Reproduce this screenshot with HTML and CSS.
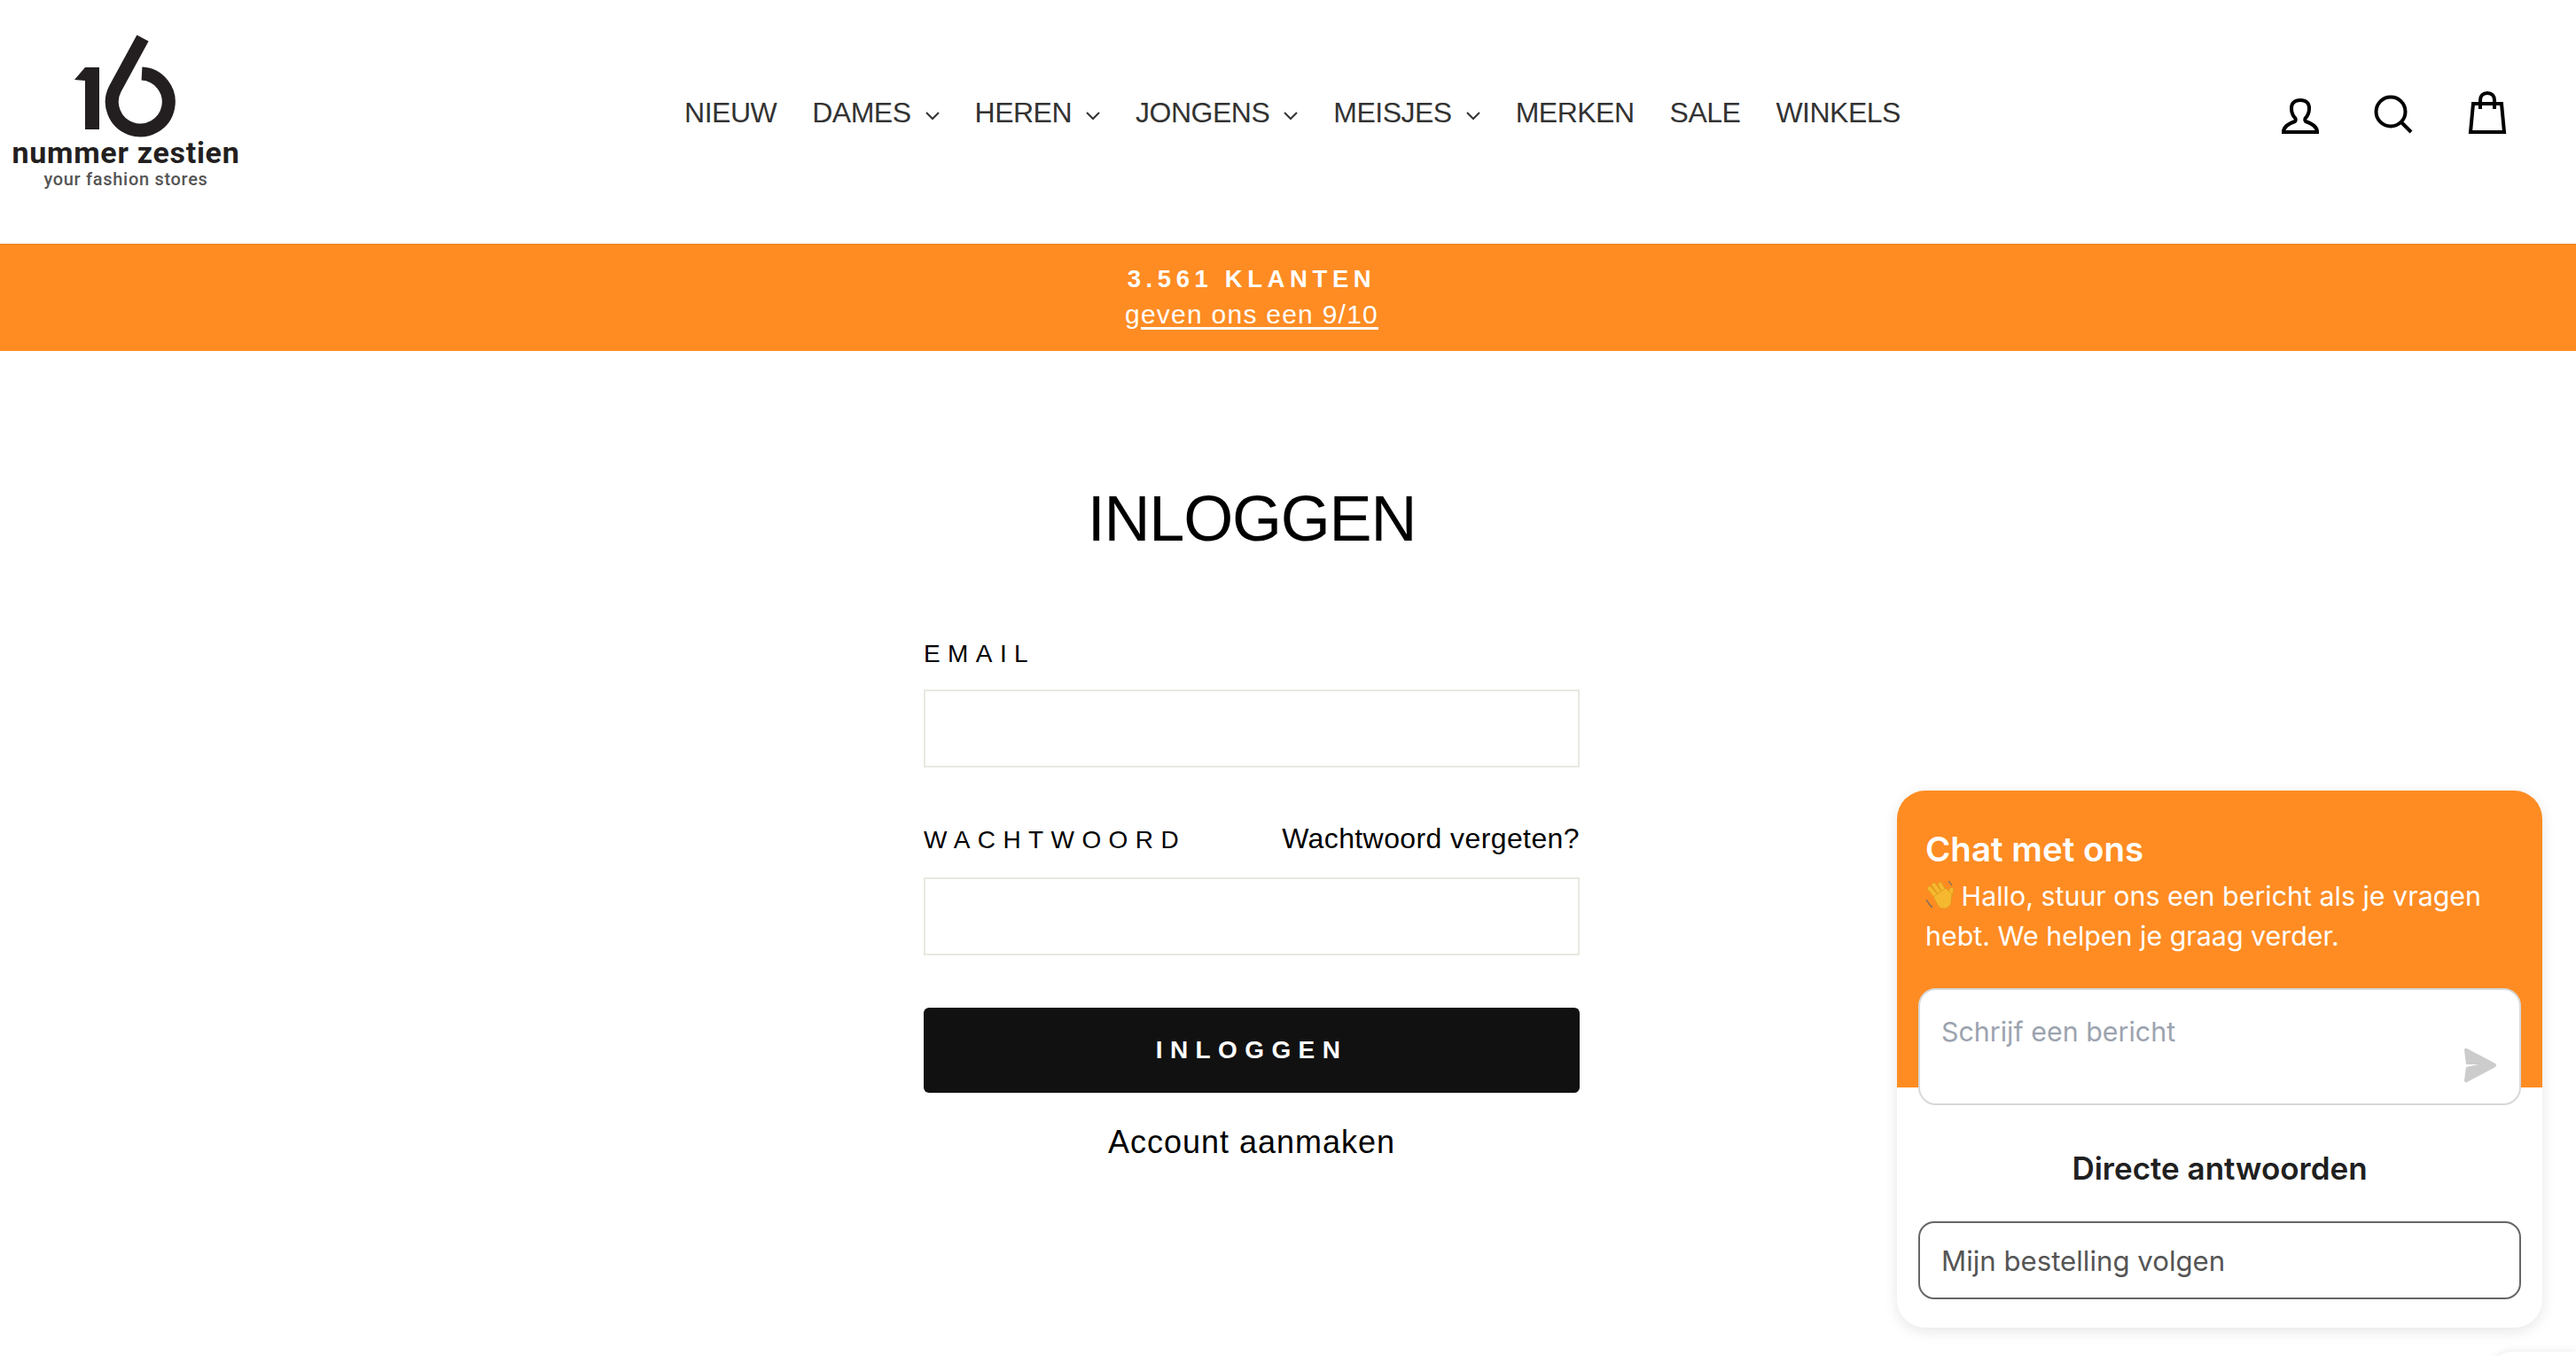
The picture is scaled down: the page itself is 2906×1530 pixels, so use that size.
FILE: index.html
```html
<!DOCTYPE html>
<html lang="nl">
  <head>
    <meta charset="UTF-8">
    <title>Inloggen - Nummer Zestien</title>
    <link rel="stylesheet" href="styles.css">
  </head>
  <body>
    <header class="site-header">
      <a class="logo" href="#">
        <svg class="logo-mark" width="130" height="118" viewBox="80 38 130 118">
          <path d="M84 90 L96 76 L112 76 L112 146 L96 146 L96 91 Z" fill="#231f20"/>
          <path d="M161 43 L130 100 A32 32 0 1 0 160 83" fill="none" stroke="#231f20" stroke-width="15"/>
        </svg>
        <span class="logo-name">nummer zestien</span>
        <span class="logo-tag">your fashion stores</span>
      </a>
      <nav class="main-nav">
        <a href="#">NIEUW</a>
        <a href="#">DAMES<svg class="chevron" viewBox="0 0 16 10"><path d="M1 1 L8 8 L15 1"/></svg></a>
        <a href="#">HEREN<svg class="chevron" viewBox="0 0 16 10"><path d="M1 1 L8 8 L15 1"/></svg></a>
        <a href="#">JONGENS<svg class="chevron" viewBox="0 0 16 10"><path d="M1 1 L8 8 L15 1"/></svg></a>
        <a href="#">MEISJES<svg class="chevron" viewBox="0 0 16 10"><path d="M1 1 L8 8 L15 1"/></svg></a>
        <a href="#">MERKEN</a>
        <a href="#">SALE</a>
        <a href="#">WINKELS</a>
      </nav>
      <div class="header-icons">
        <svg width="42" height="40" viewBox="0 0 42 40"><path d="M2 38 H40 C40 31 33 28 27 26 C26 25 26 23 27 22 C30 19 31 15 31 11 C31 5 27 2 21 2 C15 2 11 5 11 11 C11 15 12 19 15 22 C16 23 16 25 15 26 C9 28 2 31 2 38 Z" /></svg>
        <svg width="44" height="44" viewBox="0 0 44 44"><circle cx="19" cy="19" r="16.5"/><path d="M31 31 L42 42"/></svg>
        <svg width="44" height="48" viewBox="0 0 44 48"><path d="M6 14 H38 L41 46 H3 Z"/><path d="M14 20 V10 C14 5 17 2 22 2 C27 2 30 5 30 10 V20"/></svg>
      </div>
    </header>

    <div class="announcement">
      <div class="announcement-inner">
        <p class="announcement-title">3.561 KLANTEN</p>
        <a class="announcement-link" href="#">geven ons een 9/10</a>
      </div>
    </div>

    <main class="page">
      <div class="login">
        <h1>INLOGGEN</h1>
        <form>
          <label class="field-label" for="email">EMAIL</label>
          <input class="field" id="email" type="email">
          <div class="label-row">
            <label class="field-label" for="password">WACHTWOORD</label>
            <a class="forgot" href="#">Wachtwoord vergeten?</a>
          </div>
          <input class="field" id="password" type="password">
          <button class="btn" type="button">INLOGGEN</button>
          <a class="create" href="#">Account aanmaken</a>
        </form>
      </div>
    </main>

    <aside class="chat">
      <h2 class="chat-title">Chat met ons</h2>
      <p class="chat-intro"><svg class="wave" width="32" height="34" viewBox="0 0 32 34"><g fill="#f5b82e" stroke="#d9921a" stroke-width="0.6"><rect x="6" y="6" width="5" height="17" rx="2.5" transform="rotate(-40 8 14)"/><rect x="11" y="2" width="5" height="18" rx="2.5" transform="rotate(-36 13 11)"/><rect x="17" y="2" width="5" height="17" rx="2.5" transform="rotate(-30 19 10)"/><rect x="26" y="8" width="5" height="13" rx="2.5" transform="rotate(15 28 14)"/><path d="M9 19 L23 9 L30 16 L29 26 C27 32 20 34 15 30 Z"/></g><path d="M1 22 L5 28 M4 27 L8 31 M26 1 L30 6" stroke="#6b6b6b" stroke-width="1.2" fill="none"/></svg> Hallo, stuur ons een bericht als je vragen hebt. We helpen je graag verder.</p>
      <div class="chat-input">
        <span class="chat-placeholder">Schrijf een bericht</span>
        <svg class="send" width="38" height="40" viewBox="0 0 38 40"><path d="M1 3 Q1 0 4 1 L36 18 Q38 20 36 22 L4 39 Q1 40 1 37 L3 22 L17 19 L3 19 Z"/></svg>
      </div>
      <h3 class="chat-subtitle">Directe antwoorden</h3>
      <button class="chat-option" type="button">Mijn bestelling volgen</button>
    </aside>
    <div class="corner-badge"></div>
  </body>
</html>
```

FILE: styles.css
```css
html, body {
  margin: 0;
  padding: 0;
  height: 1530px;
  overflow: hidden;
  background: #ffffff;
}

body {
  font-family: "Liberation Sans", Arial, sans-serif;
  color: #000000;
  position: relative;
}

a {
  color: inherit;
  text-decoration: none;
}

.site-header {
  height: 275px;
  display: grid;
  grid-template-columns: 1fr auto 1fr;
  align-items: center;
}

.logo {
  align-self: start;
  display: flex;
  flex-direction: column;
  align-items: center;
  width: 284px;
  padding-top: 38px;
  font-family: Roboto, sans-serif;
}

.logo-mark {
  display: block;
  margin-left: 6px;
}

.logo-name {
  font-size: 34px;
  line-height: 32px;
  font-weight: 700;
  letter-spacing: 0.7px;
  color: #231f20;
  white-space: nowrap;
}

.logo-tag {
  margin-top: 2px;
  font-size: 20px;
  line-height: 24px;
  font-weight: 500;
  letter-spacing: 0.7px;
  color: #555555;
  white-space: nowrap;
}

.main-nav {
  display: flex;
  align-items: center;
  gap: 40px;
  margin-top: -21px;
  margin-left: 10px;
  font-size: 32px;
  line-height: 40px;
  letter-spacing: -0.5px;
  color: #333333;
}

.chevron {
  width: 16px;
  height: 10px;
  margin-left: 16px;
  vertical-align: 2px;
  fill: none;
  stroke: #333333;
  stroke-width: 2;
}

.header-icons {
  display: flex;
  justify-content: flex-end;
  align-items: flex-end;
  gap: 62px;
  padding-right: 78px;
  margin-top: -21px;
}

.header-icons svg {
  display: block;
  fill: none;
  stroke: #000000;
  stroke-width: 4;
}

.announcement {
  height: 120px;
  background: #fe8c23;
  border-top: 1px solid #e58026;
  color: #ffffff;
  padding-right: 82px;
  display: flex;
  justify-content: center;
}

.announcement-inner {
  text-align: center;
  padding-top: 21px;
}

.announcement-title {
  margin: 0;
  font-size: 27.5px;
  line-height: 36px;
  font-weight: 700;
  letter-spacing: 5.6px;
}

.announcement-link {
  display: block;
  font-size: 30px;
  line-height: 44px;
  letter-spacing: 1.25px;
  text-decoration: underline;
  text-underline-offset: 4px;
}

.page {
  padding-right: 82px;
  display: flex;
  justify-content: center;
}

.login {
  width: 740px;
}

h1 {
  margin: 146px 0 0;
  font-size: 72px;
  line-height: 86px;
  font-weight: 400;
  letter-spacing: -1.2px;
  text-align: center;
}

form {
  display: block;
  margin-top: 94px;
}

.field-label {
  display: block;
  font-size: 28px;
  line-height: 32px;
  letter-spacing: 8.4px;
}

.field {
  display: block;
  box-sizing: border-box;
  width: 100%;
  height: 88px;
  margin-top: 24px;
  border: 2px solid #e8e8e1;
  border-radius: 0;
  background: #ffffff;
  padding: 0 20px;
}

.label-row {
  display: flex;
  justify-content: space-between;
  align-items: baseline;
  margin-top: 63px;
}

.label-row + .field {
  margin-top: 26px;
}

.forgot {
  font-size: 32px;
  line-height: 34px;
  letter-spacing: 0.4px;
}

.btn {
  display: block;
  width: 100%;
  height: 96px;
  margin-top: 59px;
  border: none;
  border-radius: 6px;
  background: #111111;
  color: #ffffff;
  font-family: inherit;
  font-size: 28px;
  font-weight: 700;
  letter-spacing: 8.4px;
}

.create {
  display: block;
  margin-top: 34px;
  font-size: 36px;
  line-height: 44px;
  letter-spacing: 1px;
  text-align: center;
}

.chat {
  position: absolute;
  left: 2140px;
  top: 892px;
  box-sizing: border-box;
  width: 728px;
  height: 606px;
  padding: 0 24px;
  border-radius: 32px;
  background: linear-gradient(#fe8c23 335px, #ffffff 335px);
  box-shadow: 0 4px 16px rgba(0, 0, 0, 0.1);
  font-family: Inter, sans-serif;
}

.chat-title {
  margin: 0;
  padding: 42px 8px 0;
  font-size: 38.5px;
  line-height: 48px;
  font-weight: 600;
  color: #ffffff;
}

.chat-intro {
  margin: 0;
  padding: 7px 8px 0;
  font-size: 30.4px;
  line-height: 44.8px;
  color: #ffffff;
}

.wave {
  vertical-align: -5px;
}

.chat-input {
  position: relative;
  box-sizing: border-box;
  height: 132px;
  margin-top: 36.4px;
  padding: 25px 24px;
  border: 2px solid #d6d8da;
  border-radius: 20px;
  background: #ffffff;
}

.chat-placeholder {
  font-size: 30.4px;
  line-height: 44px;
  color: #9ca3af;
}

.send {
  position: absolute;
  right: 25px;
  bottom: 23px;
  fill: #cccccc;
}

.chat-subtitle {
  margin: 49px 0 0;
  font-size: 35px;
  line-height: 44px;
  font-weight: 600;
  text-align: center;
  color: #202020;
}

.chat-option {
  display: block;
  box-sizing: border-box;
  width: 100%;
  height: 88px;
  margin-top: 38px;
  padding: 3px 24px 0;
  border: 2px solid #666666;
  border-radius: 18px;
  background: #ffffff;
  font-family: inherit;
  font-size: 31.2px;
  color: #555555;
  text-align: left;
}

.corner-badge {
  position: absolute;
  right: 0;
  top: 1525px;
  width: 96px;
  height: 40px;
  border-radius: 24px 0 0 0;
  background: #ffffff;
  box-shadow: 0 0 10px rgba(0, 0, 0, 0.1);
}
```
